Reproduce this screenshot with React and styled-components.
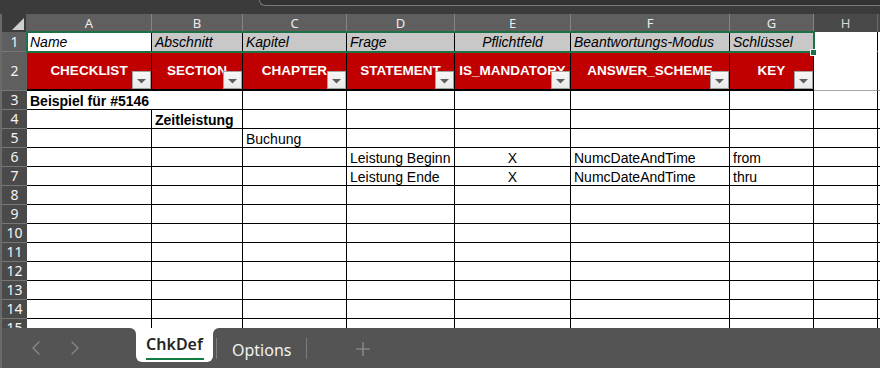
import React from 'react';
import styled, { createGlobalStyle } from 'styled-components';
import { ChevronLeft, ChevronRight, Plus } from 'lucide-react';

const GlobalStyle = createGlobalStyle`
  html, body { margin: 0; padding: 0; background: #3a3a3a; }
  *, *::before, *::after { box-sizing: border-box; }
`;

const Window = styled.div`
  position: relative;
  width: 880px;
  height: 368px;
  display: flex;
  flex-direction: column;
  overflow: hidden;
  background: #3a3a3a;
  &::after {
    content: '';
    position: absolute;
    left: 0;
    top: 14px;
    bottom: 0;
    width: 2px;
    background: #6a6a6a;
    pointer-events: none;
  }
`;

const TopStrip = styled.div`
  height: 14px;
  flex: none;
  display: flex;
  justify-content: flex-end;
  background: #3b3b3b;
`;

const FormulaBox = styled.div`
  width: 621px;
  height: 6px;
  background: #323232;
  border-left: 1px solid #7a7a7a;
  border-bottom: 1px solid #7a7a7a;
  border-bottom-left-radius: 6px;
`;

const Sheet = styled.div`
  position: relative;
  flex: none;
  height: 314px;
  overflow: hidden;
  display: grid;
  grid-template-columns: 27px 125px 91px 104px 108px 116px 159px 84px 64px 1fr;
  grid-template-rows: 18px 20px 39px repeat(13, 19px);
  background: #fff;
`;

const Corner = styled.div`
  background: #3b3b3b;
  border-right: 1px solid #5a5a5a;
  display: flex;
  align-items: flex-end;
  justify-content: flex-end;
  padding: 0 2px 2px 0;
`;

const ColHead = styled.div`
  background: ${p => (p.$sel ? '#5f5f5f' : '#494949')};
  border-right: 1px solid ${p => (p.$sel ? '#858585' : '#6a6a6a')};
  color: ${p => (p.$sel ? '#ececec' : '#d6d6d6')};
  font-family: "Noto Sans", "Open Sans", sans-serif;
  font-size: 13px;
  display: flex;
  align-items: center;
  justify-content: center;
  line-height: 1;
`;

const RowHead = styled.div`
  background: ${p => (p.$sel ? '#5f5f5f' : '#4a4a4a')};
  border-bottom: 1px solid #777;
  color: #f4f4f4;
  font-family: "Noto Sans", "Open Sans", sans-serif;
  font-size: 14px;
  display: flex;
  align-items: center;
  justify-content: center;
  padding-left: 2px;
  line-height: 1;
`;

const Cell = styled.div`
  position: relative;
  grid-column: span ${p => p.$span || 1};
  display: flex;
  align-items: center;
  justify-content: ${p => (p.$center ? 'center' : 'flex-start')};
  padding: 1px 3px 0;
  overflow: hidden;
  white-space: nowrap;
  font-family: "Liberation Sans", Arial, sans-serif;
  font-size: 14px;
  font-weight: ${p => (p.$bold ? 700 : 400)};
  font-style: ${p => (p.$italic ? 'italic' : 'normal')};
  color: #000;
  background: ${p => p.$fill || '#fff'};
  border-right: 1px solid ${p => p.$vline || '#000'};
  border-bottom: 1px solid ${p => p.$hline || '#000'};
`;

const HeadCell = styled(Cell)`
  justify-content: center;
  padding: 0 0 1px 0;
  background: #c00000;
  color: #fff;
  font-weight: 700;
  font-size: 13.5px;
  border-bottom: 2px solid #000;
`;

const FilterButton = styled.div`
  position: absolute;
  right: 0;
  bottom: 0;
  width: 19px;
  height: 18px;
  background: linear-gradient(#f7f7f7, #e9e9e9);
  border: 1px solid #a3a3a3;
  display: flex;
  align-items: center;
  justify-content: center;
  padding-top: 2px;
`;

const Selection = styled.div`
  position: absolute;
  left: 26px;
  top: 17px;
  width: 789px;
  height: 22px;
  border: 2px solid #1e7145;
  pointer-events: none;
`;

const FillHandle = styled.div`
  position: absolute;
  left: 810px;
  top: 35px;
  width: 7px;
  height: 7px;
  background: #1e7145;
  border: 1px solid #fff;
  pointer-events: none;
`;

const TabBar = styled.div`
  flex: none;
  height: 40px;
  display: flex;
  background: #fff;
`;

const Nav = styled.div`
  width: 136px;
  background: #545454;
  border-top-right-radius: 6px;
  display: flex;
  align-items: center;
  padding: 0 0 0 24px;
  gap: 15px;
  color: #8c8c8c;
`;

const TabSlot = styled.div`
  width: 77px;
  background: #545454;
  display: flex;
  flex-direction: column;
`;

const ActiveTab = styled.div`
  height: 34px;
  background: #fff;
  border-radius: 0 0 6px 6px;
  display: flex;
  flex-direction: column;
  align-items: center;
  padding-top: 6px;
`;

const TabLabel = styled.span`
  font-family: "Noto Sans", "Open Sans", sans-serif;
  font-size: 16px;
  font-weight: ${p => (p.$active ? 600 : 400)};
  line-height: 20px;
  color: ${p => (p.$active ? '#262626' : '#f2f2f2')};
  margin-top: ${p => (p.$active ? 0 : 3)}px;
`;

const Underline = styled.div`
  width: 58px;
  height: 2px;
  margin-top: 4px;
  background: #107c41;
`;

const Rest = styled.div`
  flex: 1;
  background: #545454;
  border-top-left-radius: 6px;
  display: flex;
  align-items: center;
  padding-left: 3px;
  color: #9a9a9a;
`;

const Divider = styled.div`
  width: 1px;
  height: 21px;
  background: #7c7c7c;
  margin: 0 ${p => p.$mr || 0}px 0 ${p => p.$ml || 0}px;
`;

const AddButton = styled.div`
  margin-left: 45px;
  display: flex;
  align-items: center;
  margin-top: 1px;
`;

const cols = ['A', 'B', 'C', 'D', 'E', 'F', 'G', 'H', ''];
const headers = ['CHECKLIST', 'SECTION', 'CHAPTER', 'STATEMENT', 'IS_MANDATORY', 'ANSWER_SCHEME', 'KEY'];
const labels = [
  { t: 'Name' },
  { t: 'Abschnitt', g: true },
  { t: 'Kapitel', g: true },
  { t: 'Frage', g: true },
  { t: 'Pflichtfeld', g: true, c: true },
  { t: 'Beantwortungs-Modus', g: true },
  { t: 'Schlüssel', g: true },
];

const data = {
  3: [{ col: 0, t: 'Beispiel für #5146', b: true, span: 2 }],
  4: [{ col: 1, t: 'Zeitleistung', b: true }],
  5: [{ col: 2, t: 'Buchung' }],
  6: [
    { col: 3, t: 'Leistung Beginn' },
    { col: 4, t: 'X', c: true },
    { col: 5, t: 'NumcDateAndTime' },
    { col: 6, t: 'from' },
  ],
  7: [
    { col: 3, t: 'Leistung Ende' },
    { col: 4, t: 'X', c: true },
    { col: 5, t: 'NumcDateAndTime' },
    { col: 6, t: 'thru' },
  ],
};

function Arrow() {
  return (
    <svg width="9" height="5" viewBox="0 0 9 5">
      <polygon points="0,0 9,0 4.5,4.5" fill="#5e5e5e" />
    </svg>
  );
}

function DataRow({ n }) {
  const items = data[n] || [];
  const cells = [];
  let c = 0;
  while (c < 9) {
    const it = items.find(x => x.col === c);
    if (it) {
      cells.push(
        <Cell key={c} $span={it.span} $bold={it.b} $center={it.c}>
          {it.t}
        </Cell>
      );
      c += it.span || 1;
    } else {
      cells.push(<Cell key={c} />);
      c += 1;
    }
  }
  return (
    <>
      <RowHead>{n}</RowHead>
      {cells}
    </>
  );
}

export default function App() {
  const rows = [];
  for (let n = 3; n <= 15; n++) rows.push(<DataRow key={n} n={n} />);
  return (
    <Window>
      <GlobalStyle />
      <TopStrip>
        <FormulaBox />
      </TopStrip>
      <Sheet>
        <Corner>
          <svg width="12" height="12" viewBox="0 0 12 12">
            <polygon points="12,0 12,12 0,12" fill="#cfcfcf" />
          </svg>
        </Corner>
        {cols.map((c, i) => (
          <ColHead key={i} $sel={i < 7}>{c}</ColHead>
        ))}

        <RowHead $sel>1</RowHead>
        {labels.map((l, i) => (
          <Cell key={i} $italic $fill={l.g ? '#c8c8c8' : '#fff'} $center={l.c} $hline="#fff">
            {l.t}
          </Cell>
        ))}
        <Cell $hline="#fff" />
        <Cell $hline="#fff" $vline="#fff" />

        <RowHead $sel>2</RowHead>
        {headers.map(h => (
          <HeadCell key={h}>
            {h}
            <FilterButton>
              <Arrow />
            </FilterButton>
          </HeadCell>
        ))}
        <Cell $hline="#a6a6a6" />
        <Cell $hline="#a6a6a6" $vline="#fff" />

        {rows}

        <Selection />
        <FillHandle />
      </Sheet>
      <TabBar>
        <Nav>
          <ChevronLeft size={24} strokeWidth={1.2} />
          <ChevronRight size={24} strokeWidth={1.2} />
        </Nav>
        <TabSlot>
          <ActiveTab>
            <TabLabel $active>ChkDef</TabLabel>
            <Underline />
          </ActiveTab>
        </TabSlot>
        <Rest>
          <Divider $mr={15} />
          <TabLabel>Options</TabLabel>
          <Divider $ml={15} />
          <AddButton>
            <Plus size={22} strokeWidth={1.2} />
          </AddButton>
        </Rest>
      </TabBar>
    </Window>
  );
}
